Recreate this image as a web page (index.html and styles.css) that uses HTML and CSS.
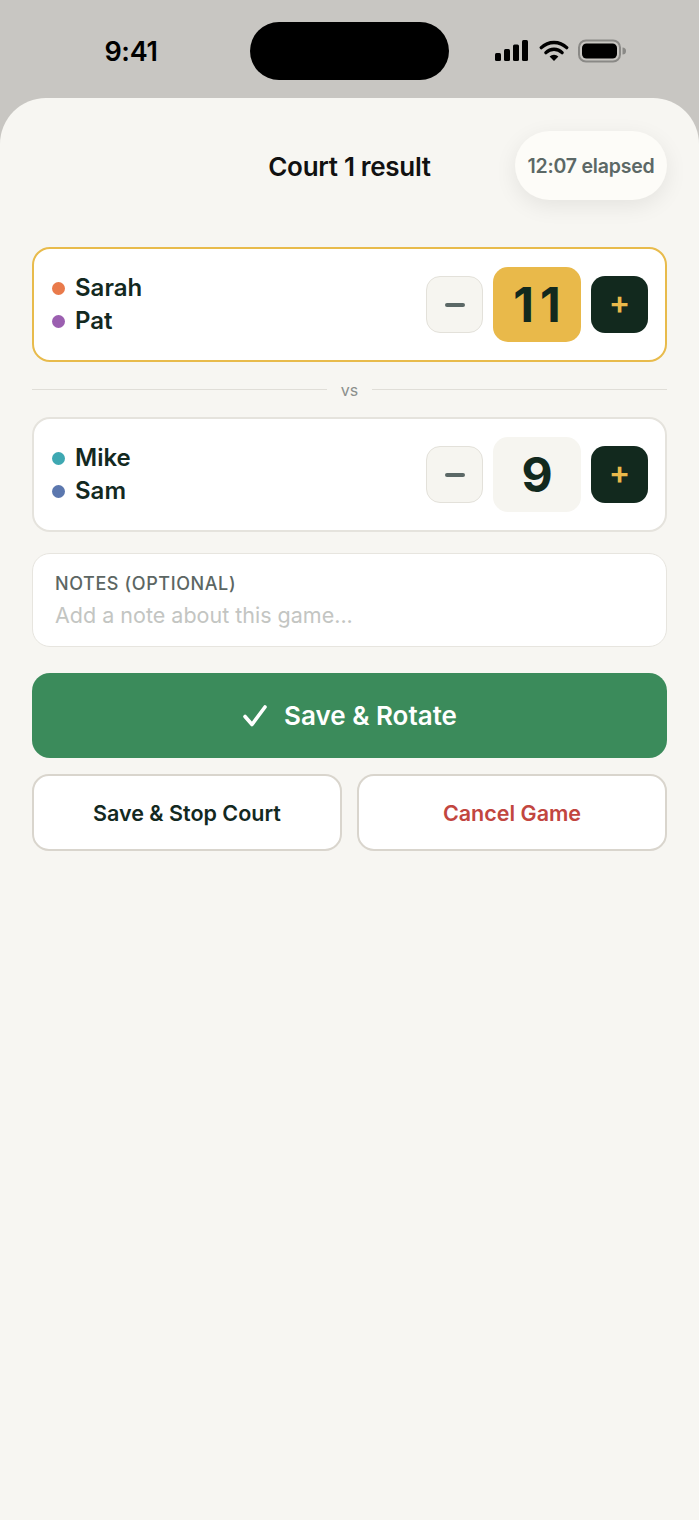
FILE: index.html
```html
<!DOCTYPE html>
<html lang="en">
<head>
    <meta charset="UTF-8">
    <meta name="viewport" content="width=device-width, initial-scale=1.0">
    <title>Court 1 result</title>
    <link rel="stylesheet" href="styles.css">
</head>
<body>

    <!-- Status bar -->
    <div class="status-bar">
        <span class="time">9:41</span>
        <div class="island"></div>
        <div class="status-icons">
            <svg width="35" height="22" viewBox="0 0 35 22">
                <rect x="0" y="13" width="6" height="8" rx="1.5" fill="#000"/>
                <rect x="9" y="9" width="6" height="12" rx="1.5" fill="#000"/>
                <rect x="18" y="4.5" width="6" height="16.5" rx="1.5" fill="#000"/>
                <rect x="27" y="0" width="6" height="21" rx="1.5" fill="#000"/>
            </svg>
            <svg width="30" height="22" viewBox="0 0 30 22">
                <path d="M15 21 L10.6 16.4 A6.4 6.4 0 0 1 19.4 16.4 Z" fill="#000"/>
                <path d="M6.9 12.6 A11.6 11.6 0 0 1 23.1 12.6" fill="none" stroke="#000" stroke-width="3.4" stroke-linecap="round"/>
                <path d="M2.3 7.6 A18.2 18.2 0 0 1 27.7 7.6" fill="none" stroke="#000" stroke-width="3.4" stroke-linecap="round"/>
            </svg>
            <svg width="48" height="24" viewBox="0 0 48 24">
                <rect x="1" y="1.5" width="41" height="21" rx="7" fill="none" stroke="#8a8986" stroke-width="2"/>
                <rect x="4" y="4.5" width="35" height="15" rx="4.5" fill="#000"/>
                <path d="M44.5 8.5 A3.5 3.5 0 0 1 44.5 15.5 Z" fill="#8a8986"/>
            </svg>
        </div>
    </div>

    <div class="sheet">
        <header class="sheet-header">
            <span></span>
            <h1 class="title">Court 1 result</h1>
            <div class="elapsed">12:07 elapsed</div>
        </header>

        <!-- Team 1 (leading) -->
        <div class="team-card winning">
            <div class="players">
                <div class="player"><span class="dot" style="background:#e97a4b"></span>Sarah</div>
                <div class="player"><span class="dot" style="background:#9b5fb0"></span>Pat</div>
            </div>
            <div class="score-controls">
                <button class="step minus" aria-label="Decrease"><span class="minus-bar"></span></button>
                <div class="score">11</div>
                <button class="step plus" aria-label="Increase">+</button>
            </div>
        </div>

        <div class="vs"><span>vs</span></div>

        <!-- Team 2 -->
        <div class="team-card">
            <div class="players">
                <div class="player"><span class="dot" style="background:#3ea8b2"></span>Mike</div>
                <div class="player"><span class="dot" style="background:#5b77ae"></span>Sam</div>
            </div>
            <div class="score-controls">
                <button class="step minus" aria-label="Decrease"><span class="minus-bar"></span></button>
                <div class="score">9</div>
                <button class="step plus" aria-label="Increase">+</button>
            </div>
        </div>

        <div class="notes">
            <label class="notes-label" for="notes">Notes (optional)</label>
            <input id="notes" class="notes-input" type="text" placeholder="Add a note about this game...">
        </div>

        <button class="primary-btn">
            <svg width="26" height="24" viewBox="0 0 26 24">
                <path d="M3 12.5 L10 20.5 L23 3" fill="none" stroke="#fff" stroke-width="3.6" stroke-linecap="round" stroke-linejoin="round"/>
            </svg>
            Save &amp; Rotate
        </button>

        <div class="secondary-row">
            <button class="secondary-btn">Save &amp; Stop Court</button>
            <button class="secondary-btn danger">Cancel Game</button>
        </div>
    </div>

</body>
</html>
```

FILE: styles.css
```css
body {
    margin: 0;
    background-color: #c8c6c2;
    font-family: Inter, "Noto Sans", sans-serif;
    color: #13291f;
    min-height: 1520px;
    display: flex;
    flex-direction: column;
}

button {
    font-family: inherit;
}

/* Status bar */
.status-bar {
    height: 98px;
    display: grid;
    grid-template-columns: 1fr auto 1fr;
    align-items: center;
}

.time {
    font-size: 27px;
    font-weight: 600;
    color: #000;
    justify-self: center;
    margin-left: 12px;
    margin-top: 4px;
    letter-spacing: -0.3px;
}

.island {
    width: 199px;
    height: 58px;
    background-color: #000;
    border-radius: 29px;
    margin-top: 4px;
}

.status-icons {
    display: flex;
    align-items: center;
    gap: 9px;
    margin-left: 46px;
    margin-top: 4px;
}

/* Sheet */
.sheet {
    flex: 1;
    background-color: #f7f6f2;
    border-radius: 46px 46px 0 0;
    padding: 33px 32px 40px;
    display: flex;
    flex-direction: column;
}

.sheet-header {
    display: grid;
    grid-template-columns: 1fr auto 1fr;
    align-items: center;
    margin-bottom: 47px;
}

.title {
    margin: 0;
    font-size: 26px;
    font-weight: 600;
    color: #111;
    letter-spacing: -0.3px;
    padding-top: 1px;
}

.elapsed {
    justify-self: end;
    height: 69px;
    width: 152px;
    border-radius: 35px;
    background-color: #fdfcf8;
    box-shadow: 0 6px 22px rgba(0, 0, 0, 0.08);
    display: flex;
    align-items: center;
    justify-content: center;
    font-size: 19.5px;
    font-weight: 600;
    color: #5c6866;
    letter-spacing: -0.2px;
}

/* Team cards */
.team-card {
    background-color: #fff;
    border: 2px solid #e5e3dd;
    border-radius: 18px;
    padding: 18px 17px;
    display: flex;
    align-items: center;
    justify-content: space-between;
}

.team-card.winning {
    border-color: #e8bb4c;
}

.players {
    display: flex;
    flex-direction: column;
    gap: 5px;
}

.player {
    display: flex;
    align-items: center;
    gap: 10px;
    font-size: 24px;
    font-weight: 600;
    line-height: 28px;
    padding-left: 1px;
}

.dot {
    width: 13px;
    height: 13px;
    border-radius: 50%;
}

.score-controls {
    display: flex;
    align-items: center;
    gap: 10px;
}

.step {
    width: 57px;
    height: 57px;
    border-radius: 14px;
    border: none;
    padding: 0;
    display: flex;
    align-items: center;
    justify-content: center;
    cursor: pointer;
}

.step.minus {
    background-color: #f6f5f0;
    border: 1.5px solid #e3e1da;
}

.minus-bar {
    width: 20px;
    height: 4px;
    border-radius: 2px;
    background-color: #5b6866;
}

.step.plus {
    background-color: #12291e;
    color: #e8b94a;
    font-size: 32px;
    font-weight: 600;
    line-height: 1;
    padding-bottom: 3px;
}

.score {
    width: 88px;
    height: 75px;
    border-radius: 15px;
    background-color: #f6f5f0;
    display: flex;
    align-items: center;
    justify-content: center;
    font-size: 48px;
    font-weight: 700;
    color: #12291e;
    letter-spacing: 6px;
    text-indent: 6px;
}

.winning .score {
    background-color: #e9b94a;
}

/* vs divider */
.vs {
    display: flex;
    align-items: center;
    gap: 14px;
    height: 55px;
    font-size: 16px;
    color: #8b8f8c;
}

.vs::before,
.vs::after {
    content: "";
    flex: 1;
    height: 1.5px;
    background-color: #e0ded8;
}

.vs span {
    margin-top: 1px;
}

/* Notes */
.notes {
    margin-top: 21px;
    background-color: #fff;
    border: 1.5px solid #e7e5df;
    border-radius: 18px;
    padding: 19px 22px 18px;
    display: flex;
    flex-direction: column;
    gap: 8px;
}

.notes-label {
    font-size: 18px;
    font-weight: 500;
    letter-spacing: 0.6px;
    text-transform: uppercase;
    color: #5c6663;
}

.notes-input {
    border: none;
    outline: none;
    padding: 0;
    font-family: inherit;
    font-size: 21.5px;
    color: #13291f;
    background: transparent;
}

.notes-input::placeholder {
    color: #c3c5c2;
}

/* Buttons */
.primary-btn {
    margin-top: 26px;
    height: 85px;
    border: none;
    border-radius: 18px;
    background-color: #3b8b5b;
    color: #fff;
    font-size: 26px;
    font-weight: 600;
    display: flex;
    align-items: center;
    justify-content: center;
    gap: 16px;
    cursor: pointer;
}

.secondary-row {
    margin-top: 16px;
    display: grid;
    grid-template-columns: 1fr 1fr;
    gap: 15px;
}

.secondary-btn {
    height: 77px;
    border: 2px solid #d9d5cd;
    border-radius: 17px;
    background-color: #fff;
    font-size: 21.5px;
    font-weight: 600;
    color: #13291f;
    cursor: pointer;
}

.secondary-btn.danger {
    color: #c2463f;
}
```
